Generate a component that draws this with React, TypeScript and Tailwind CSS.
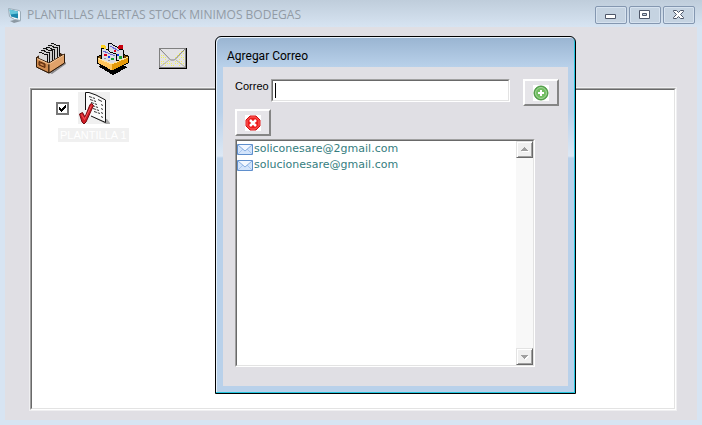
import type { ReactNode } from "react";

const sunken =
  "border border-t-[#a0a0a0] border-l-[#a0a0a0] border-r-white border-b-white";
const sunkenInner =
  "border border-t-[#696969] border-l-[#696969] border-r-[#e3e3e3] border-b-[#e3e3e3]";
const raised =
  "border-2 border-t-white border-l-white border-r-[#858585] border-b-[#858585] bg-[#e6e5e9]";

function CardBox() {
  return (
    <svg width="30" height="31" viewBox="0 0 30 31">
      <path d="M14 30 30 19v2L16 31z" fill="#8b8b8f" />
      <path d="M.5 14.500 15 5l13.500 8v7L13 30 .5 24z" fill="#5d3413" stroke="#2d1807" />
      {[5, 4, 3, 2, 1, 0].map((i) => (
        <g key={i} transform={`translate(${2.5 + i * 2.4} ${9.5 - i * 1.8})`} shapeRendering="crispEdges">
          <path d="M0 0h3l3 2h3v12H8L0 9z" fill={i === 0 ? "#d9d9d9" : "#cecece"} />
          <path d="M0 0h3l3 2h3v10" fill="none" stroke="#111" />
        </g>
      ))}
      <path d="M.5 14.500 13 20v10L.5 24z" fill="#d08c50" stroke="#2d1807" />
      <path d="m13 20 15.500-9v9L13 30z" fill="#e0a26a" stroke="#2d1807" />
      <path d="m1 15.500 12 5.500 15-9" fill="none" stroke="#f6c797" />
      <path d="m3 18.500 6 2.500v3.500L3 22z" fill="#8a4a1f" stroke="#5a2c0c" />
      <path d="m4.500 20.500 3 1.200v1.300l-3-1.200z" fill="#d89a60" />
    </svg>
  );
}

function LetterTray() {
  return (
    <svg width="33" height="33" viewBox="0 0 33 33" shapeRendering="crispEdges">
      <path d="m2 24 14-4 16 5-15 8z" fill="#000" />
      <path d="m1 15 15-7 16 6v7l-16 8-15-8z" fill="#7a4a00" stroke="#000" />
      <path d="M12 1h2l5 3 2 1 2 2 4 1v13l-15-7z" fill="#d9dae2" stroke="#000" />
      <path d="M22 4h1V3h4v4h-5z" fill="#c8000c" />
      <path d="m14 4 9 5" stroke="#6a6ad8" />
      <path d="M18 8h2v2h-2z" fill="#e00020" />
      <path d="M20 12h3v2h-3z" fill="#1740ee" />
      <path d="M23 14h3v3h-3z" fill="#16a334" />
      <path d="M5 6h3l4 2 2 2 6 2v12L5 18z" fill="#dcdde6" stroke="#000" />
      <path d="M5 3h4v1h1v3H8V6H5z" fill="#ffd21c" />
      <path d="m7 9 12 5" stroke="#6a6ad8" />
      <path d="M8 12h3v2H8z" fill="#e00020" />
      <path d="M12 14h2v2h-2z" fill="#1740ee" />
      <path d="M15 16h3v2h-3z" fill="#16a334" />
      <path d="m8 16 2 1m2 1 2 1" stroke="#8e8f9a" />
      <path d="m1 16 15 6v7L1 21z" fill="#ffc45c" />
      <path d="m16 22 16-7v6l-16 8z" fill="#e59a0c" />
      <path d="m1 16 15 6 16-7" fill="none" stroke="#ffe3a4" />
      <path d="M1 15v6l15 8 16-8v-7" fill="none" stroke="#000" />
    </svg>
  );
}

// Sparse yellow stipple on the envelope's paper, below the flap.
const stipple: string[] = [];
for (let x = 2; x < 26; x += 2) {
  for (let y = 3; y < 19; y += 2) {
    const flap = Math.min(x, 27 - x) + 1;
    if (y > flap || (x > 14 && y > 24 - x)) {
      stipple.push(`M${x} ${y}h1v1h-1z`);
    }
  }
}

function EnvelopeLarge() {
  return (
    <svg width="28" height="21" viewBox="0 0 28 21">
      <path d="M0 0h28v21H0z" fill="#000" />
      <path d="M0 0h27v20H0z" fill="#808080" />
      <path d="M1 1h25v18H1z" fill="#e3e2e5" />
      <path d={stipple.filter((_, i) => i % 3 !== 0).join("")} fill="#f0f060" />
      <path d="m1 19 9-7m7 0 9 7" stroke="#b4b4b4" />
      <path d="m1 1 10.500 11h4L26 1" fill="none" stroke="#808080" />
    </svg>
  );
}

function CheckedSheet() {
  return (
    <svg width="32" height="32" viewBox="0 0 32 32" className="bg-[#f0f0f0]">
      <path d="m15 25 14 2 3 4v1h-4z" fill="#a9a9a9" />
      <path d="M7.500 18V.5H11L18 3l9.500 5v22.500L13 24" fill="#fafafa" stroke="#111" />
      <path
        d="m11 4.500 6 2m-5 1 6 2m-5 1 6 2m-5 1 6 2m-5 1 6 2m-5 1 6 2"
        fill="none"
        stroke="#333"
        strokeDasharray="3 1"
      />
      <path d="m20 7.500 4 2m-1 3 2 1m-2 3 2 1m-2 3 2 1m-2 3 2 1" fill="none" stroke="#333" />
      <path d="m1.500 22 3-1.500L7 25l5-12.500 1.500-1 2 2L8 30l-2 2-2-2z" fill="#d01c24" stroke="#710b10" />
      <path d="m3.500 22.500 3 5 7-14" fill="none" stroke="#f4555a" />
    </svg>
  );
}

function MailSmall() {
  return (
    <svg width="16" height="11" viewBox="0 0 16 11">
      <path d="M.5.5h15v10H.5z" fill="#d3e4fb" stroke="#5f8fcd" />
      <path d="m1 10 5-5m4 0 5 5" stroke="#a9c5ee" />
      <path d="m1 1 7 6 7-6" fill="#f2f7ff" stroke="#87aee0" />
    </svg>
  );
}

function CaptionButton({ label, children }: { label: string; children: ReactNode }) {
  return (
    <button
      aria-label={label}
      className="flex h-[18px] w-8 items-center justify-center rounded-xs border border-[#8497b0] bg-[#c5d3e1] shadow-[inset_0_0_0_1px_#d6e2ef]"
    >
      <svg width="12" height="10" viewBox="0 0 12 10">{children}</svg>
    </button>
  );
}

function ScrollButton({ label, path }: { label: string; path: string }) {
  return (
    <button
      aria-label={label}
      className="flex h-[17px] w-[17px] items-center justify-center border border-t-[#e3e3e3] border-l-[#e3e3e3] border-r-[#696969] border-b-[#696969] bg-[#f0f0f0] shadow-[inset_1px_1px_#fff,inset_-1px_-1px_#a0a0a0]"
    >
      <svg width="9" height="6" viewBox="0 0 9 6" shapeRendering="crispEdges">
        <path d={path} fill="#fff" transform="translate(1 1)" />
        <path d={path} fill="#a0a0a0" />
      </svg>
    </button>
  );
}

function EmailDialog() {
  return (
    <section
      aria-label="Agregar Correo"
      className="absolute top-9 left-[215px] flex h-[358px] w-[361px] flex-col rounded-t-md border border-black bg-[#b9d1ea] px-[7px] pb-[7px] shadow-[inset_-1px_-1px_#23c5de,inset_1px_1px_#e9f2fb] bg-[linear-gradient(#99b4d1_0px,#b9d1ea_30px,#b9d1ea_75px,#dce8f5_119px,#b9d1ea_121px)]"
    >
      <h2 className="h-[30px] px-1 pt-[11px] font-[Roboto,sans-serif] text-xs leading-4 text-black">
        Agregar Correo
      </h2>
      <div className="flex flex-1 flex-col bg-[#e0dfe4] px-3 pt-3">
        <div className="flex items-start">
          <label htmlFor="correo" className="w-9 text-[11px] leading-[14px] text-black">
            Correo
          </label>
          <div className={`relative h-[23px] flex-1 ${sunken}`}>
            <input
              id="correo"
              type="text"
              autoFocus
              className={`block h-full w-full bg-white px-1 text-xs caret-transparent outline-none ${sunkenInner}`}
            />
            <span className="pointer-events-none absolute inset-y-[3px] left-[3px] w-px bg-black" />
          </div>
          <button aria-label="Agregar" className={`mr-[-3px] ml-[13px] flex h-[27px] w-9 items-center justify-center ${raised}`}>
            <svg width="16" height="16" viewBox="0 0 16 16" className="bg-white">
              <circle cx="8" cy="8" r="7" fill="#54a94b" stroke="#4a9541" />
              <circle cx="8" cy="8" r="5.5" fill="#72bd62" stroke="#a9d99d" />
              <path d="M7 5h2v2h2v2H9v2H7V9H5V7h2z" fill="#fff" />
            </svg>
          </button>
        </div>
        <button aria-label="Eliminar" className={`mt-[3px] flex h-[27px] w-9 items-center justify-center ${raised}`}>
          <svg width="16" height="16" viewBox="0 0 16 16" className="bg-white">
            <path d="M5 1h6l4 4v6l-4 4H5l-4-4V5z" fill="#ed1c1c" stroke="#d30e12" />
            <path d="M5.500 2h5L14 5.500v5L10.500 14h-5L2 10.500v-5z" fill="none" stroke="#ff6a64" />
            <path d="m5 5 6 6m0-6-6 6" stroke="#fff" strokeWidth="2.500" />
          </svg>
        </button>
        <div className={`mt-[3px] h-[228px] w-[300px] ${sunken}`}>
          <div className={`flex h-full bg-white ${sunkenInner}`}>
            <ul className="flex-1 font-['DejaVu_Sans',sans-serif] text-[11px] leading-4 text-[#357d80]">
              <li className="flex h-4 items-center gap-px">
                <MailSmall />
                soliconesare@2gmail.com
              </li>
              <li className="flex h-4 items-center gap-px">
                <MailSmall />
                solucionesare@gmail.com
              </li>
            </ul>
            <div className="flex w-[17px] flex-col justify-between bg-[#f8f8f8]">
              <ScrollButton label="Subir" path="M4 0h1v1h1v1h1v1h1v1H1V3h1V2h1V1h1z" />
              <ScrollButton label="Bajar" path="M1 1h7v1H7v1H6v1H5v1H4V4H3V3H2V2H1z" />
            </div>
          </div>
        </div>
      </div>
    </section>
  );
}

export default function App() {
  return (
    <main className="relative flex min-h-screen flex-col bg-[#d7e4f2] px-[5px] pb-[5px] font-['Liberation_Sans',sans-serif] bg-[linear-gradient(#bfcddb_0px,#d7e4f2_27px)]">
      <header className="flex h-[27px] items-center gap-1 pr-0.5 pt-[3px]">
        <svg width="18" height="18" viewBox="0 0 18 18">
          <path d="m5 15 8-2 3 2-7 2z" fill="#8c98a2" />
          <path d="M3.500 2.500 14 4.500l1.500 1v9l-6-1-5-3z" fill="#f5f9fb" stroke="#9aabb8" />
          <path d="m4.500 3.500 8.500 2v7l-7-2z" fill="#1b87ad" />
          <path d="m4.500 3.500 8.500 2v2l-8 1z" fill="#65c7dc" />
        </svg>
        <h1 className="flex-1 font-['Open_Sans',sans-serif] text-xs leading-4 text-[#929ba5]">
          PLANTILLAS ALERTAS STOCK MINIMOS BODEGAS
        </h1>
        <div className="flex gap-0.5">
          <CaptionButton label="Minimizar">
            <path d="M.5 4.500h10v4H.5z" fill="#fff" stroke="#4e5769" />
          </CaptionButton>
          <CaptionButton label="Maximizar">
            <path d="M.5.5h10v8H.5z" fill="#fff" stroke="#4e5769" />
            <path d="M3.500 3.500h4v2h-4z" fill="#c5d3e1" stroke="#4e5769" />
          </CaptionButton>
          <CaptionButton label="Cerrar">
            <path d="M.5.5h3l2 2 2-2h3v1l-3 3 3 3v1h-3l-2-2-2 2h-3v-1l3-3-3-3z" fill="#fff" stroke="#4e5769" />
          </CaptionButton>
        </div>
      </header>
      <div className="flex flex-1 flex-col bg-[#e0dfe4] pr-5 pb-[9px] pl-6">
        <nav className="flex h-[60px] items-center gap-[30px] px-[7px] pt-0.5">
          <button aria-label="Plantillas"><CardBox /></button>
          <button aria-label="Bandeja"><LetterTray /></button>
          <button aria-label="Correos"><EnvelopeLarge /></button>
        </nav>
        <div className="flex flex-1 border border-[#efeff1]">
          <div className={`flex flex-1 ${sunken}`}>
            <div className={`flex-1 bg-white pl-6 ${sunkenInner}`}>
              <div className="flex flex-col items-start gap-1 pt-0.5">
                <div className="flex items-center gap-[9px]">
                  <span className="relative flex">
                    <input
                      id="plantilla"
                      type="checkbox"
                      defaultChecked
                      className="h-[13px] w-[13px] appearance-none border-2 border-[#777] bg-white"
                    />
                    <svg className="pointer-events-none absolute inset-0" width="13" height="13" viewBox="0 0 13 13" shapeRendering="crispEdges">
                      <path d="M3 5h1v1h1v1h1V6h1V5h1V4h1V3h1v3H9v1H8v1H7v1H6v1H5V9H4V8H3z" fill="#000" />
                    </svg>
                  </span>
                  <CheckedSheet />
                </div>
                <label htmlFor="plantilla" className="ml-0.5 bg-[#f0f0f0] px-0.5 text-[11px] leading-[14px] whitespace-nowrap text-white">
                  PLANTILLA 1
                </label>
              </div>
            </div>
          </div>
        </div>
      </div>
      <EmailDialog />
    </main>
  );
}
